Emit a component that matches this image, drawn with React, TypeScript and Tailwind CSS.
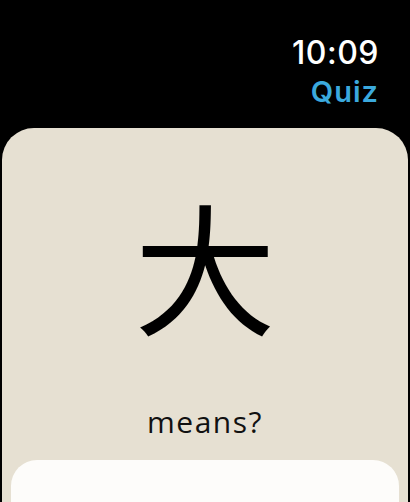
export default function App() {
  return (
    <div className="h-[502px] w-[410px] overflow-hidden bg-black font-['Inter','Noto_Sans',sans-serif]">
      <header className="flex flex-col items-end pr-[31px] pt-[36px]">
        <p className="text-[32px] font-medium leading-[34px] text-white tracking-[0.5px]">10:09</p>
        <p className="mt-[5px] text-[29px] font-semibold leading-[34px] tracking-[1px] text-[#3ba9dd]">Quiz</p>
      </header>

      <main className="mx-[2px] mt-[19px] flex h-[420px] flex-col items-center rounded-[32px] bg-[#e6e0d2] px-[9px]">
        <div className="mt-[60px] h-[150px] font-['Noto_Sans_CJK_JP',sans-serif] text-[142px] leading-[150px] text-black">
          大
        </div>
        <p className="mt-[67px] font-['Open_Sans',sans-serif] text-[30px] leading-[34px] tracking-[1.5px] text-[#111]">means?</p>
        <div className="mt-[21px] h-[80px] w-full rounded-[26px] bg-[#fdfcfa]" />
      </main>
    </div>
  );
}
